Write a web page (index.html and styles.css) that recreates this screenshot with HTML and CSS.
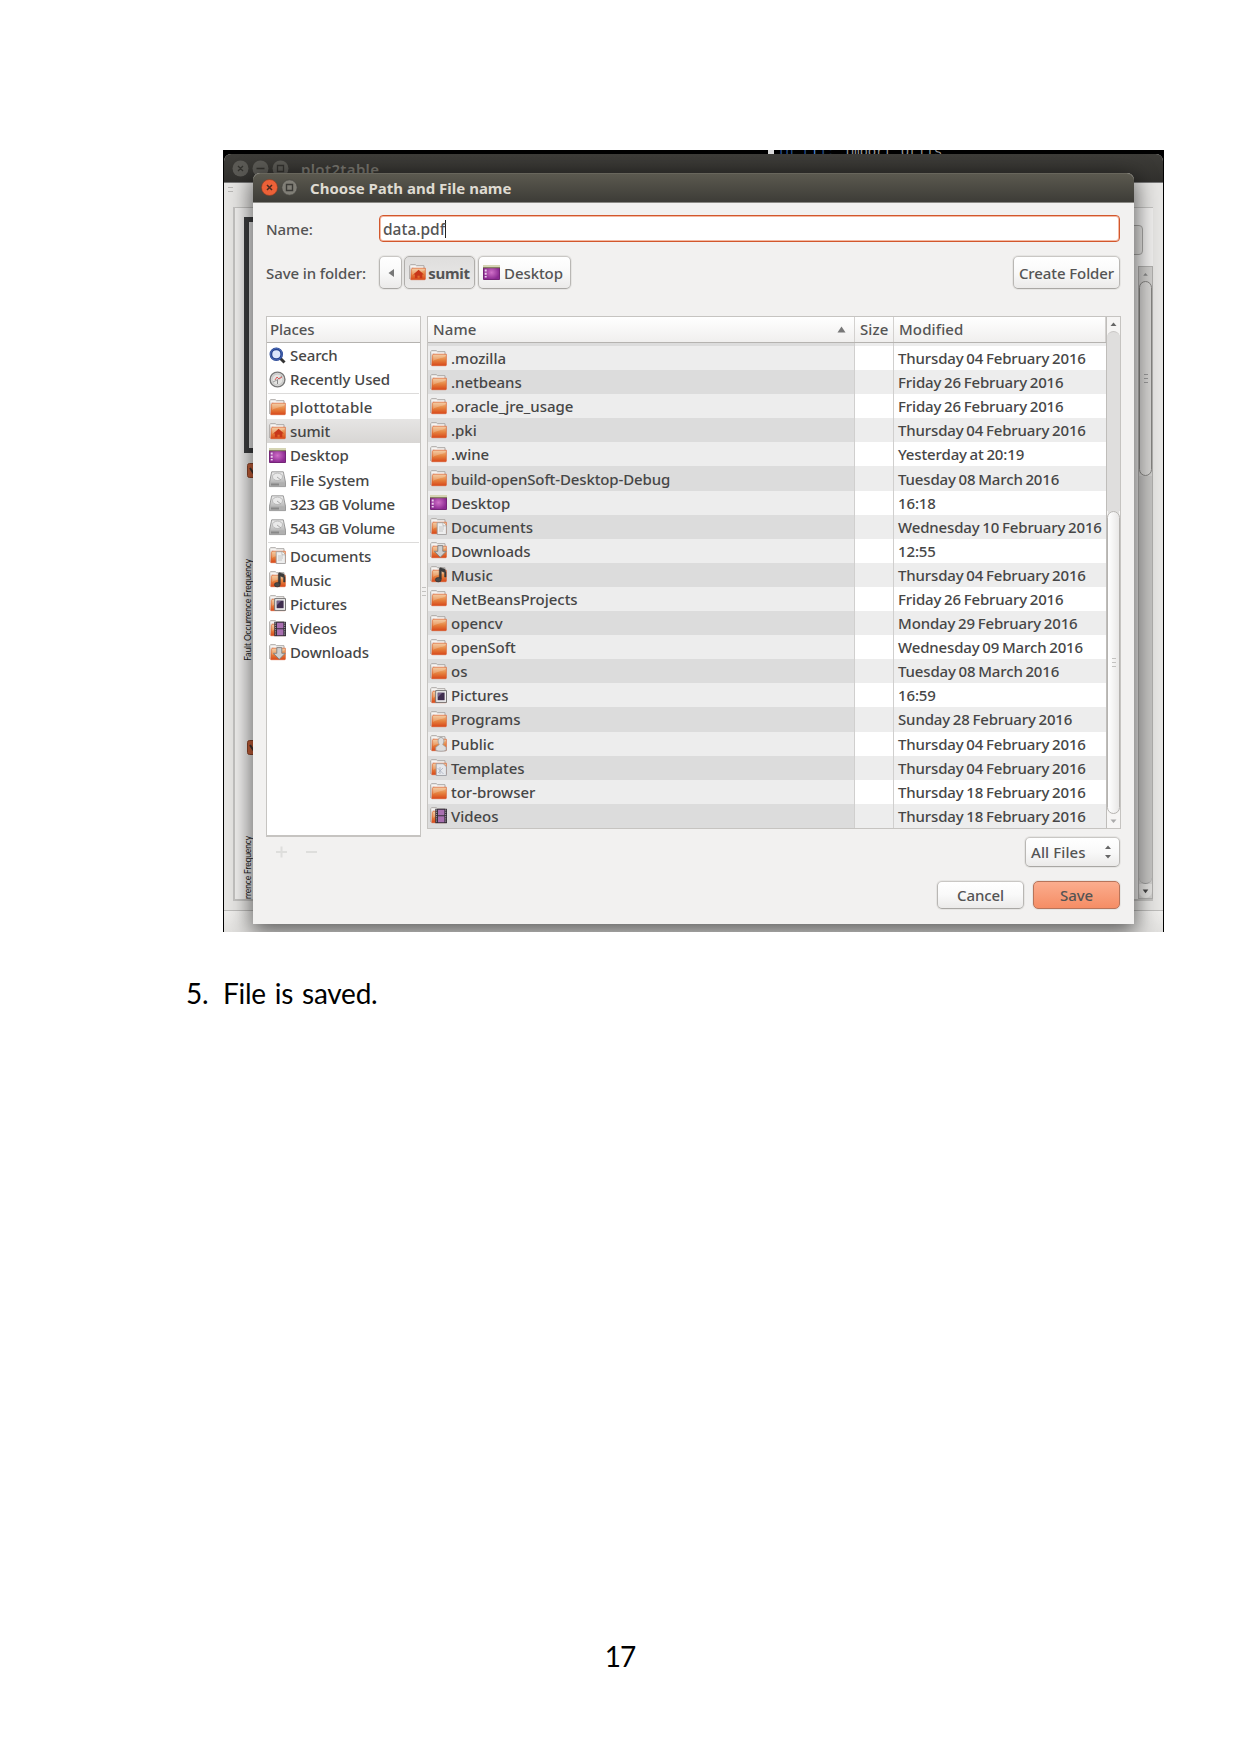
FILE: index.html
```html
<!DOCTYPE html>
<html lang="en">
<head>
<meta charset="utf-8">
<title>Manual, page 17</title>
<link rel="stylesheet" href="styles.css">
</head>
<body>
<svg class="defs" width="0" height="0">
  <defs>
    <linearGradient id="og" x1="0" y1="0" x2="0" y2="1"><stop offset="0" stop-color="#f0c08c"/><stop offset=".5" stop-color="#e68440"/><stop offset="1" stop-color="#d8481a"/></linearGradient>
    <linearGradient id="gg" x1="0" y1="0" x2="0" y2="1"><stop offset="0" stop-color="#eee"/><stop offset="1" stop-color="#a4a4a4"/></linearGradient>
    <radialGradient id="pg"><stop offset="0" stop-color="#d070c8"/><stop offset="1" stop-color="#8c2a92"/></radialGradient>
    <symbol id="folder" viewBox="0 0 17 17">
      <path d="M.7 15V1.6l1-.9h4.6l1.2 1H15v3" fill="#f6f4f2" stroke="#aaa7a4" stroke-width="1"/>
      <path d="M1.5 15.4V4h3" fill="#fff" stroke="#c9c5c1" stroke-width=".6"/>
      <path d="M2.3 5.6 3 4.2h13.4v11l-.5.5H1.8z" fill="url(#og)" stroke="#d9582a" stroke-width=".6"/>
      <path d="M3.2 11c4-3 8-2 12.7-5V5H3.2z" fill="#fff" opacity=".22"/>
    </symbol>
    <symbol id="home" viewBox="0 0 17 17"><use href="#folder"/><path d="M9.600 5.800 4.300 10.600h1.600v3.600h2.600v-2.400h2.200v2.400h2.600v-3.600h1.600z" fill="#c8371a"/></symbol>
    <symbol id="desktop" viewBox="0 0 17 17"><path d="M.5 1.5h16v14H.5z" fill="url(#pg)" stroke="#752578"/><path d="M0 1h17v2.8H0z" fill="#d5d4b4"/><path d="M0 3.3h17v.9H0z" fill="#6c6b45"/><path d="M1.7 5.5h2v2h-2zM1.7 8.8h2v2h-2zM1.7 12h2v1.6h-2z" fill="#ead2ec"/></symbol>
    <symbol id="drive" viewBox="0 0 17 17"><path d="M2.7.8h11.6l2.2 10.4v4.4H.5v-4.4z" fill="url(#gg)" stroke="#858585" stroke-width=".8"/><ellipse cx="8.5" cy="5.8" rx="5" ry="3.7" fill="#e9e9e9" stroke="#aaa" stroke-width=".7"/><path d="M.8 11.4h15.4v4H.8z" fill="#b0b0b0"/><path d="M2 12.5h8v2H2z" fill="#888"/><path d="m8 6 4 3" stroke="#aaa"/></symbol>
    <symbol id="search" viewBox="0 0 17 17"><path d="m11.5 11.5 4 4" stroke="#343434" stroke-width="3"/><circle cx="7.3" cy="7.2" r="5.4" fill="#dce6fa" stroke="#24428f" stroke-width="2.7"/><circle cx="7.3" cy="7.2" r="5.8" fill="none" stroke="#5e7cc4" stroke-width=".7"/></symbol>
    <symbol id="recent" viewBox="0 0 17 17"><circle cx="8.5" cy="8.5" r="7.4" fill="#e4e4e2" stroke="#777" stroke-width="1.4"/><circle cx="8.5" cy="8.5" r="5.6" fill="none" stroke="#b6b6b6" stroke-width=".8"/><path d="m4 11 4-2 5-4" fill="none" stroke="#888" stroke-width=".8"/><path d="m6 9 2-3 2 2 3-2" fill="none" stroke="#dd4b4b" stroke-width=".9"/><path d="M8.5 9v4" stroke="#888"/></symbol>
    <symbol id="documents" viewBox="0 0 17 17"><use href="#folder"/><path d="M7.2 4.7h6l3.2 3v8.8H7.2z" fill="#eee" stroke="#999" stroke-width=".8"/><path d="M13 4.8v3h3.2" fill="#fff" stroke="#999" stroke-width=".6"/><path d="M9 9h5M9 11h5M9 13h4" stroke="#bbb" stroke-width=".8"/></symbol>
    <symbol id="templates" viewBox="0 0 17 17"><use href="#folder"/><path d="M6.2 4.7h7l3.2 3v8.8H6.2z" fill="#e6e8ec" stroke="#9498a0" stroke-width=".8"/><path d="m7.5 9 6 6M8 14l5-5M10 8v7" stroke="#a9b1c0" stroke-width=".8"/></symbol>
    <symbol id="music" viewBox="0 0 17 17"><use href="#folder"/><path d="M9.300 13V2.500l1.200-.8 4.200 1.300 1.300 3.200V11h-1.400V6.500L11.300 5v8" fill="#3c3c3c" stroke="#333" stroke-width=".5"/><ellipse cx="8.300" cy="13.700" rx="2.900" ry="2.200" fill="#4a4a4a" stroke="#2e2e2e" stroke-width=".6"/></symbol>
    <symbol id="pictures" viewBox="0 0 17 17"><use href="#folder"/><path d="M5.7 3.6h10.8v11.8H5.7z" fill="#eee" stroke="#777"/><path d="M7.6 5.6h7v7.6h-7z" fill="#3e2d4e"/><path d="M8 6h4l-4 4z" fill="#75618a"/></symbol>
    <symbol id="videos" viewBox="0 0 17 17"><use href="#folder"/><path d="M5.3 1.8H17v14.4H5.3z" fill="#332c38"/><path d="M8 2.7h6.4v5.6H8zM8 9.2h6.4v6H8z" fill="#a86fb0"/><path d="M6.6 2.5v13.3M15.7 2.5v13.3" stroke="#aaa" stroke-width="1" stroke-dasharray="1.2 1"/></symbol>
    <symbol id="downloads" viewBox="0 0 17 17"><use href="#folder"/><path d="M7.8 3.6h5v5.7h3.4l-5.9 6-5.9-6h3.4z" fill="#cfcfcf" stroke="#808080" stroke-width=".9"/></symbol>
    <symbol id="public" viewBox="0 0 17 17"><use href="#folder"/><path d="M9.300 9.500c-2.200-3-1.300-7 1.700-7s3.900 4 1.700 7l3.500 2.700v3.300c-3 1-7.400 1-10.400 0v-3.300z" fill="#ddd" stroke="#999" stroke-width=".8"/></symbol>
  </defs>
</svg>

<main class="page">
  <figure class="shot">
    <div class="term"><i></i><b>In [</b><em>1</em><b>]:</b> import Utils</div>
    <section class="back">
      <header class="backbar">
        <svg width="58" height="18" viewBox="0 0 58 18"><g fill="#5b5a55"><circle cx="8.500" cy="8.500" r="8"/><circle cx="28.500" cy="8.500" r="8"/><circle cx="48.500" cy="8.500" r="8"/></g><path d="m6 6 5 5m0-5-5 5M24.500 8.500h8M45.500 5.500h6v6h-6z" stroke="#33322e" stroke-width="1.300" fill="none"/></svg>
        <span>plot2table</span>
      </header>
      <div class="backgrip"></div>
      <div class="backframe">
        <div class="plot"></div>
        <svg class="chk c1" width="16" height="15" viewBox="0 0 16 15"><rect x=".5" y=".5" width="15" height="14" rx="2" fill="#c9613a" stroke="#8d452a"/><path d="m3 5 4 6 6-8" fill="none" stroke="#403530" stroke-width="2"/></svg>
        <svg class="chk c2" width="16" height="15" viewBox="0 0 16 15"><rect x=".5" y=".5" width="15" height="14" rx="2" fill="#c9613a" stroke="#8d452a"/><path d="m3 5 4 6 6-8" fill="none" stroke="#403530" stroke-width="2"/></svg>
        <span class="axis a1">Fault Occurrence Frequency</span>
        <span class="axis a2">Fault Occurrence Frequency</span>
        <div class="backscroll"><svg width="13" height="14" viewBox="0 0 14 14"><path d="m4.500 9 2.500-3 2.500 3z" fill="#888"/></svg><div class="backthumb"><i class="grip"></i></div><div class="backrest"></div><svg class="down" width="13" height="14" viewBox="0 0 14 14"><path d="m4 5.500 3 4 3-4z" fill="#444"/></svg></div>
      </div>
      <div class="backbtn"></div>
      <div class="status"></div>
    </section>

    <section class="dialog">
      <header class="bar">
        <svg width="37" height="18" viewBox="0 0 37 18"><circle cx="8.500" cy="8.500" r="8" fill="#ec6138" stroke="#8d3b20" stroke-width=".6"/><path d="m6 6 5 5m0-5-5 5" stroke="#4b2b20" stroke-width="1.500"/><circle cx="28.500" cy="8.500" r="7.700" fill="#807e76" stroke="#45443f" stroke-width=".7"/><path d="M25.500 5.500h6v6h-6z" stroke="#3b3a36" stroke-width="1.400" fill="none"/></svg>
        <h1>Choose Path and File name</h1>
      </header>
      <div class="body">
        <div class="row name"><label>Name:</label><div class="input"><span>data.pdf</span></div></div>
        <div class="row path">
          <label>Save in folder:</label>
          <div class="btn prev"><svg width="8" height="10" viewBox="0 0 8 10"><path d="M7 1v8L1.500 5z" fill="#777"/></svg></div>
          <div class="btn on"><svg class="ic"><use href="#home"/></svg><b>sumit</b></div>
          <div class="btn desk"><svg class="ic"><use href="#desktop"/></svg><span>Desktop</span></div>
          <div class="btn create"><span>Create Folder</span></div>
        </div>
        <div class="panes">
          <div class="left">
            <div class="places">
              <div class="head"><span>Places</span></div>
              <div class="p"><svg class="ic"><use href="#search"/></svg><span>Search</span></div>
              <div class="p"><svg class="ic"><use href="#recent"/></svg><span>Recently Used</span></div>
              <hr>
              <div class="p"><svg class="ic"><use href="#folder"/></svg><span class="wide">plottotable</span></div>
              <div class="p sel"><svg class="ic"><use href="#home"/></svg><span>sumit</span></div>
              <div class="p"><svg class="ic"><use href="#desktop"/></svg><span>Desktop</span></div>
              <div class="p"><svg class="ic"><use href="#drive"/></svg><span>File System</span></div>
              <div class="p"><svg class="ic"><use href="#drive"/></svg><span class="tight">323 GB Volume</span></div>
              <div class="p"><svg class="ic"><use href="#drive"/></svg><span class="tight">543 GB Volume</span></div>
              <hr>
              <div class="p"><svg class="ic"><use href="#documents"/></svg><span>Documents</span></div>
              <div class="p"><svg class="ic"><use href="#music"/></svg><span>Music</span></div>
              <div class="p"><svg class="ic"><use href="#pictures"/></svg><span>Pictures</span></div>
              <div class="p"><svg class="ic"><use href="#videos"/></svg><span>Videos</span></div>
              <div class="p"><svg class="ic"><use href="#downloads"/></svg><span>Downloads</span></div>
            </div>
            <div class="pm"><svg width="42" height="12" viewBox="0 0 42 12"><path d="M0 6h11M5.500 .5v11M30 6h11" stroke="#dededc" stroke-width="2"/></svg></div>
          </div>
          <div class="split"><i class="grip"></i></div>
          <div class="right">
            <div class="list">
              <div class="table">
                <div class="head cols"><span>Name<svg width="9" height="7" viewBox="0 0 9 7"><path d="m.5 6.500 4-6 4 6z" fill="#777"/></svg></span><span>Size</span><span>Modified</span></div>
                <div class="r sliver"><span></span><span></span><span></span></div>
                <div class="r"><span><svg class="ic"><use href="#folder"/></svg>.mozilla</span><span></span><span>Thursday 04 February 2016</span></div>
                <div class="r"><span><svg class="ic"><use href="#folder"/></svg>.netbeans</span><span></span><span>Friday 26 February 2016</span></div>
                <div class="r"><span><svg class="ic"><use href="#folder"/></svg>.oracle_jre_usage</span><span></span><span>Friday 26 February 2016</span></div>
                <div class="r"><span><svg class="ic"><use href="#folder"/></svg>.pki</span><span></span><span>Thursday 04 February 2016</span></div>
                <div class="r"><span><svg class="ic"><use href="#folder"/></svg>.wine</span><span></span><span>Yesterday at 20:19</span></div>
                <div class="r"><span class="long"><svg class="ic"><use href="#folder"/></svg>build-openSoft-Desktop-Debug</span><span></span><span>Tuesday 08 March 2016</span></div>
                <div class="r"><span><svg class="ic"><use href="#desktop"/></svg>Desktop</span><span></span><span>16:18</span></div>
                <div class="r"><span><svg class="ic"><use href="#documents"/></svg>Documents</span><span></span><span>Wednesday 10 February 2016</span></div>
                <div class="r"><span><svg class="ic"><use href="#downloads"/></svg>Downloads</span><span></span><span>12:55</span></div>
                <div class="r"><span><svg class="ic"><use href="#music"/></svg>Music</span><span></span><span>Thursday 04 February 2016</span></div>
                <div class="r"><span><svg class="ic"><use href="#folder"/></svg>NetBeansProjects</span><span></span><span>Friday 26 February 2016</span></div>
                <div class="r"><span><svg class="ic"><use href="#folder"/></svg>opencv</span><span></span><span>Monday 29 February 2016</span></div>
                <div class="r"><span><svg class="ic"><use href="#folder"/></svg>openSoft</span><span></span><span>Wednesday 09 March 2016</span></div>
                <div class="r"><span><svg class="ic"><use href="#folder"/></svg>os</span><span></span><span>Tuesday 08 March 2016</span></div>
                <div class="r"><span><svg class="ic"><use href="#pictures"/></svg>Pictures</span><span></span><span>16:59</span></div>
                <div class="r"><span><svg class="ic"><use href="#folder"/></svg>Programs</span><span></span><span>Sunday 28 February 2016</span></div>
                <div class="r"><span><svg class="ic"><use href="#public"/></svg>Public</span><span></span><span>Thursday 04 February 2016</span></div>
                <div class="r"><span><svg class="ic"><use href="#templates"/></svg>Templates</span><span></span><span>Thursday 04 February 2016</span></div>
                <div class="r"><span><svg class="ic"><use href="#folder"/></svg>tor-browser</span><span></span><span>Thursday 18 February 2016</span></div>
                <div class="r"><span><svg class="ic"><use href="#videos"/></svg>Videos</span><span></span><span>Thursday 18 February 2016</span></div>
              </div>
              <div class="scroll">
                <svg width="13" height="14" viewBox="0 0 13 14"><path d="m3.500 9 3-3.500 3 3.500z" fill="#666"/></svg>
                <div class="trough"></div>
                <div class="thumb"><i class="grip"></i></div>
                <svg width="13" height="14" viewBox="0 0 13 14"><path d="m3.500 5.500 3 3.500 3-3.500z" fill="#aaa"/></svg>
              </div>
            </div>
            <div class="btn filter"><span>All Files</span><svg width="8" height="14" viewBox="0 0 8 14"><path d="m1 4 3-3.500L7 4zM1 10l3 3.500L7 10z" fill="#666"/></svg></div>
          </div>
        </div>
        <div class="actions"><div class="btn"><span>Cancel</span></div><div class="btn save"><span>Save</span></div></div>
      </div>
    </section>
  </figure>
  <p class="step"><span>5.</span><span>File is saved.</span></p>
  <footer>17</footer>
</main>
</body>
</html>
```
FILE: styles.css
```css
* { box-sizing: border-box; }
body { margin: 0; background: #fff; }
.defs { position: absolute; }
.page { height: 1754px; padding-top: 150px; display: flex; flex-direction: column; }

.shot {
  position: relative; flex: none; margin: 0 0 0 223px; width: 941px; height: 782px;
  overflow: hidden; background: #000;
  font: 500 15px/24px "Noto Sans", sans-serif; letter-spacing: -.1px; color: #545454;
  white-space: nowrap;
}
.term { position: absolute; left: 545px; top: -6px; font: 14px/17px "Liberation Mono", monospace; letter-spacing: -.15px; color: #9a9a9a; }
.term i { display: inline-block; width: 6px; height: 14px; background: #ddd; margin-right: 3px; vertical-align: -3px; }
.term b { font-weight: normal; color: #2a5590; }
.term em { font-style: normal; color: #4e8cd8; }

/* window behind the dialog */
.back { position: absolute; left: 1px; top: 4px; width: 939px; height: 790px; border-radius: 7px 7px 0 0; background: #e6e5e3; overflow: hidden; }
.backbar { height: 29px; background: linear-gradient(#3e3d39, #31302d); display: flex; align-items: center; padding: 2px 0 0 8px; border-bottom: 1px solid #777; }
.backbar span { margin-left: 11px; font-weight: 600; font-size: 15px; letter-spacing: .35px; color: #77756e; }
.backgrip { position: absolute; left: 4px; top: 33px; width: 5px; height: 8px; background: repeating-linear-gradient(#b9b8b6 0 1px, transparent 1px 4px); }
.backframe { position: absolute; left: 9px; top: 53px; width: 920px; height: 694px; border: 2px solid #c3c2c0; border-right: 0; border-top: 1px solid #c3c2c0; background: #f0efee; overflow: hidden; }
.plot { position: absolute; left: 9px; top: 9px; width: 40px; height: 236px; background: #e8e8e8; border: 5px solid #3d3e40; }
.chk { position: absolute; left: 12px; }
.c1 { top: 255px; }
.c2 { top: 532px; }
.axis { position: absolute; left: 8px; writing-mode: vertical-rl; transform: rotate(180deg); font: 8.500px/10px "Lato", sans-serif; letter-spacing: -.12px; color: #222; }
.a1 { top: 351px; }
.a2 { top: 628px; }
.backscroll { position: absolute; right: 0; top: 58px; width: 15px; height: 633px; background: #d0cfcd; border: 1px solid #b0afad; display: flex; flex-direction: column; }
.backscroll svg { flex: none; display: block; }
.backthumb { height: 195px; border: 1px solid #858481; border-radius: 7px; background: #d6d5d3; display: grid; place-items: center; }
.backthumb .grip { background: repeating-linear-gradient(#999 0 1px, transparent 1px 4px); }
.backrest { flex: 1; border-bottom: 1px solid #999; border-radius: 0 0 8px 8px; background: #c6c5c3; }
.down { background: #e2e1df; border-radius: 0 0 7px 7px; }
.backbtn { position: absolute; right: 20px; top: 71px; width: 60px; height: 30px; border: 1px solid #a9a8a6; border-radius: 4px; background: #e4e3e1; }
.status { position: absolute; left: 0; right: 0; top: 756px; height: 34px; border-top: 1px solid #bdbcba; background: linear-gradient(#eeedeb, #dad9d7); }
.grip { width: 4px; height: 9px; background: repeating-linear-gradient(#c3c2c0 0 1px, transparent 1px 4px); }

.dialog { position: absolute; left: 30px; top: 23px; width: 881px; height: 751px; border-radius: 7px 7px 0 0; background: #f2f1f0; box-shadow: 0 6px 22px 2px rgba(0,0,0,.6); }
.bar { height: 30px; border-radius: 7px 7px 0 0; background: linear-gradient(#5b594f, #3d3c37); border-top: 1px solid #68665c; border-bottom: 1px solid #8b8a86; padding: 0 0 0 8px; display: flex; align-items: center; }
h1 { margin: 0 0 0 12px; font-size: 15px; font-weight: 700; letter-spacing: 0; color: #dfdbd2; }
.body { padding: 12px 13px 0; }
.row { display: flex; align-items: center; }
.row label { width: 113px; letter-spacing: -.1px; }
.input { width: 741px; height: 27px; border: 1px solid #d2572c; border-radius: 4px; background: #fff; box-shadow: inset 0 0 0 1px #f3b9a3; padding: 0 3px; display: flex; align-items: center; font-size: 15.500px; }
.input span { border-right: 1px solid #222; line-height: 18px; letter-spacing: 0; }
.path { margin-top: 14px; height: 33px; }
.btn { height: 33px; border: 1px solid #b9b7b4; border-color: #c9c7c4 #b9b7b4 #a9a7a4; border-radius: 5px; background: linear-gradient(#fff, #f9f9f9 50%, #ebeae9); box-shadow: 0 0 0 1px #e6e5e3; display: flex; align-items: center; justify-content: center; }
.ic { width: 17px; height: 17px; flex: none; display: block; }
.prev { width: 23px; }
.on { width: 71px; margin-left: 2px; gap: 2px; background: linear-gradient(#dfdedd, #eae9e8); border-color: #b0aeab; }
.on b { letter-spacing: -.3px; }
.desk { width: 93px; margin-left: 3px; gap: 4px; padding-right: 3px; }
.create { width: 107px; margin: 0 1px 0 auto; }
.panes { margin-top: 27px; display: flex; height: 551px; }
.left { width: 155px; }
.places { height: 521px; border: 1px solid #c6c4c1; border-bottom-width: 2px; background: #fff; }
.head { height: 26px; background: linear-gradient(#fff, #f0efee); border-bottom: 1px solid #b5b3b0; padding: 0 0 1px 3px; display: flex; align-items: center; }
.p { height: 24.100px; display: flex; align-items: center; gap: 4px; padding-left: 2px; color: #464646; }
.p .wide { letter-spacing: .3px; }
.p .tight { letter-spacing: -.3px; }
.sel { background: linear-gradient(#e6e5e4, #d8d6d4); }
hr { margin: 2px 1px 1px; border: 0; height: 1px; background: #dcdbda; }
.pm { padding: 9px 0 0 10px; }
.pm svg { display: block; }
.split { width: 6px; display: grid; place-items: center; }
.right { width: 694px; }
.list { height: 513px; border: 1px solid #c6c4c1; display: flex; background: #fff; }
.table { width: 678px; overflow: hidden; }
.cols, .r { display: grid; grid-template-columns: 427px 39px 1fr; }
.cols { padding: 0; align-items: stretch; }
.cols span { display: flex; align-items: center; padding: 0 4px 1px 5px; border-right: 1px solid #d3d1cf; letter-spacing: .1px; }
.cols span:first-child { justify-content: space-between; padding-right: 8px; }
.r { height: 24.100px; color: #464646; }
.r span { display: flex; align-items: center; border-right: 1px solid #d0cfce; }
.r span:first-child { background: #ededed; gap: 4px; padding-left: 2px; letter-spacing: -.03px; }
.r .long:first-child { letter-spacing: -.12px; }
.r span:last-child { padding-left: 4px; border: 0; word-spacing: -1px; letter-spacing: -.14px; }
.r:nth-child(even) { background: #ededed; }
.r:nth-child(even) span:first-child { background: #dcdcdc; }
.r.sliver { height: 3px; }
.scroll { width: 14px; border-left: 1px solid #bfbdba; display: flex; flex-direction: column; background: #f6f5f4; }
.scroll svg { display: block; flex: none; }
.trough { flex: 1; background: #dfdedd; border-radius: 7px 7px 0 0; border-top: 1px solid #c8c6c4; }
.thumb { height: 303px; border: 1px solid #b5b3b0; border-radius: 7px; background: linear-gradient(90deg, #fff, #e9e8e7); box-shadow: 0 -8px 0 -1px #dfdedd; display: grid; place-items: center; }
.filter { width: 95px; height: 30px; margin: 8px 1px 0 auto; justify-content: space-between; padding: 0 7px 0 5px; }
.filter span { letter-spacing: .1px; }
.actions { display: flex; justify-content: flex-end; gap: 9px; margin: 14px 1px 0 0; }
.actions .btn { width: 87px; height: 28px; }
.actions .save { background: linear-gradient(#fbad8e, #f58d65); border-color: #b7745a; }

.step { margin: 43px 0 0 186px; display: flex; font: 28px/36px "Lato", sans-serif; word-spacing: 2px; letter-spacing: -.25px; color: #000; }
.step span:first-child { width: 37px; }
footer { margin-top: auto; padding: 0 1px 80px 0; text-align: center; font: 28px/36px "Lato", sans-serif; letter-spacing: -1px; color: #000; }
```
